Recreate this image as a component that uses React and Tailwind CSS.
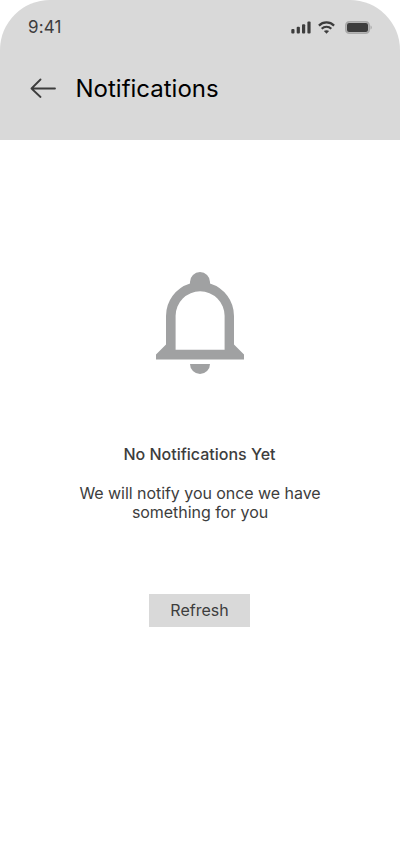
function SignalIcon() {
  return (
    <svg width="20" height="13" viewBox="0 0 20 13" fill="#3d3d3d" aria-hidden="true">
      <rect x="0.3" y="8" width="3.2" height="4.5" rx="1" />
      <rect x="5.7" y="5.8" width="3.2" height="6.7" rx="1" />
      <rect x="11" y="3.2" width="3.2" height="9.3" rx="1" />
      <rect x="16.4" y="0.5" width="3.2" height="12" rx="1" />
    </svg>
  );
}

function WifiIcon() {
  return (
    <svg width="17" height="13" viewBox="0 0 17 13" fill="none" stroke="#3d3d3d" strokeWidth="2.2" aria-hidden="true">
      <path d="M0.9 4.6C5.2 0.4 11.8 0.4 16.1 4.6" />
      <path d="M3.7 7.7C6.4 5.1 10.6 5.1 13.3 7.7" />
      <path d="M5.9 10.1C7.4 8.8 9.6 8.8 11.1 10.1L8.5 12.7Z" fill="#3d3d3d" stroke="none" />
    </svg>
  );
}

function BatteryIcon() {
  return (
    <svg width="27" height="13" viewBox="0 0 27 13" aria-hidden="true">
      <rect x="0.9" y="0.9" width="23.2" height="11.2" rx="3.4" fill="none" stroke="#3d3d3d" strokeOpacity="0.3" strokeWidth="1.8" />
      <path d="M25.5 4.5V8.5C26.3 8.1 26.8 7.3 26.8 6.5S26.3 4.9 25.5 4.5Z" fill="#3d3d3d" fillOpacity="0.3" />
      <rect x="2" y="2" width="21" height="9" rx="2" fill="#3d3d3d" />
    </svg>
  );
}

function BellIcon() {
  return (
    <svg width="88" height="102" viewBox="0 0 88 102" fill="#a0a1a2" aria-hidden="true">
      <path
        fillRule="evenodd"
        d="M34 11.5V10A10 10 0 0 1 54 10V11.5A34 34 0 0 1 78 44V72.5L88 82.5V87.5H0V82.5L10 72.5V44A34 34 0 0 1 34 11.5ZM19.6 77.7H68.6V43.8A24.5 24.5 0 0 0 19.6 43.8Z"
      />
      <path d="M34 92H54A10 10 0 0 1 34 92Z" />
    </svg>
  );
}

export default function App() {
  return (
    <div className="flex h-[852px] w-[400px] flex-col overflow-hidden bg-white font-['Inter',sans-serif] text-[#3d3d3d]">
      <header className="h-[140px] rounded-t-[50px] bg-[#d9d9d9]">
        <div className="flex h-[54px] items-center pr-7 pl-7">
          <span className="text-[17px] leading-5 font-[430] tracking-[0.01em]">9:41</span>
          <div className="ml-auto flex items-center">
            <SignalIcon />
            <span className="ml-[7px]"><WifiIcon /></span>
            <span className="ml-[10px]"><BatteryIcon /></span>
          </div>
        </div>
        <div className="flex items-center pt-[18px] pl-[30px]">
          <button type="button" aria-label="Back" className="mr-[19.5px] pb-[2px]">
            <svg width="26" height="20" viewBox="0 0 26 20" fill="none" stroke="#3d3d3d" strokeWidth="1.8" strokeLinecap="round" strokeLinejoin="round">
              <path d="M25 10.5H1.5M10.5 1.5L1.5 10.5L10.5 19" />
            </svg>
          </button>
          <h1 className="pt-px text-2xl leading-8 text-black">Notifications</h1>
        </div>
      </header>
      <main className="flex flex-col items-center pt-[132px]">
        <BellIcon />
        <h2 className="mt-[70px] mr-px text-base leading-5 font-medium">No Notifications Yet</h2>
        <p className="mt-5 text-center text-base leading-[19px] tracking-[-0.003em]">
          We will notify you once we have
          <br />
          something for you
        </p>
        <button type="button" className="mt-[72px] mr-px h-[33px] w-[101px] bg-[#d9d9d9] pb-px text-base">
          Refresh
        </button>
      </main>
    </div>
  );
}
